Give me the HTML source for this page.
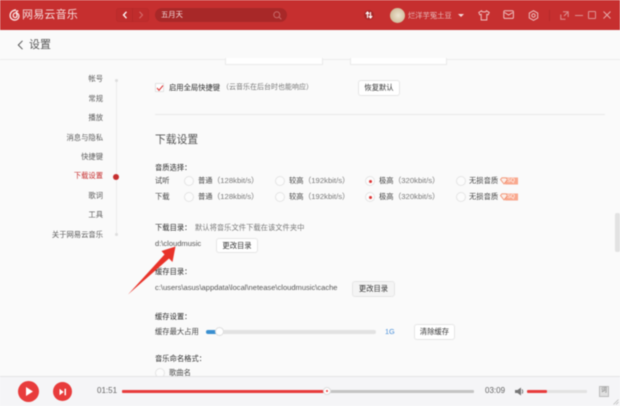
<!DOCTYPE html>
<html lang="zh">
<head>
<meta charset="utf-8">
<title>设置</title>
<style>
*{margin:0;padding:0;box-sizing:border-box}
html,body{width:620px;height:406px;overflow:hidden;background:#fafafa}
body{font-family:"Liberation Sans","Noto Sans CJK SC",sans-serif;position:relative;color:#555}
#w{position:absolute;left:0;top:0;width:620px;height:406px;filter:blur(.4px);overflow:hidden}
.t{position:absolute;white-space:nowrap;font-size:7.3px;line-height:12px;color:#444}
.g{color:#777}
.t .g{font-size:7.7px}
.b{color:#2a2a2a}
.nav{position:absolute;right:517px;font-size:7.3px;line-height:12px;color:#5a5a5a;white-space:nowrap}
.btn{position:absolute;background:#fff;border:1px solid #e6e6e6;border-radius:3px;font-size:7.3px;color:#333;text-align:center;white-space:nowrap}
.r{position:absolute;width:10px;height:10px;border-radius:50%;background:#fcfcfc;border:1px solid #e4e4e4}
.r.on:after{content:"";position:absolute;left:2.5px;top:2.5px;width:3px;height:3px;border-radius:50%;background:#d33}
svg{position:absolute;overflow:visible}
</style>
</head>
<body>
<div id="w">
<!-- top bar -->
<div style="position:absolute;left:0;top:0;width:620px;height:30px;background:#c62f2f"></div>
<svg style="left:9px;top:9px" width="12" height="12" viewBox="0 0 13 13" fill="none" stroke="#fbeaea" stroke-width="1.4"><path d="M7.6 1C4 1.2 1.2 3.6 1.2 7c0 2.9 2.3 5 5 5 2.600 0 4.600-1.900 4.600-4.300 0-2-1.500-3.500-3.300-3.500-1.700 0-3 1.200-3 2.800 0 1.300 1 2.300 2.200 2.300 1.100 0 2-.9 2-2L8 2.800c.2-.8 1.200-.9 2-.3"/></svg>
<div class="t" style="left:22px;top:7px;font-size:11px;line-height:16px;letter-spacing:.2px;color:#f6dcdc">网易云音乐</div>
<div style="position:absolute;left:116px;top:8px;width:33px;height:14px;border:1px solid #b92a2a;border-radius:3px;background:#c02c2c"></div>
<div style="position:absolute;left:132px;top:8px;width:1px;height:14px;background:#b42828"></div>
<svg style="left:122px;top:11px" width="6" height="8" fill="none" stroke="#fff" stroke-width="1.300"><path d="M4.500 .8 1.500 4l3 3.200"/></svg>
<svg style="left:138px;top:11px" width="6" height="8" fill="none" stroke="#d56a6a" stroke-width="1.100"><path d="M1.500 .8 4.500 4l-3 3.200"/></svg>
<div style="position:absolute;left:155px;top:8px;width:132px;height:14px;border-radius:7px;background:#a82828"></div>
<div class="t" style="left:161px;top:9px;color:#f3dede">五月天</div>
<svg style="left:273px;top:11px" width="9" height="9" fill="none" stroke="#c96a6a" stroke-width="1"><circle cx="3.800" cy="3.800" r="3"/><path d="M6 6l2.300 2.300"/></svg>
<div style="position:absolute;left:364px;top:10px;width:10px;height:10px;border-radius:50%;background:#a82828"></div>
<svg style="left:365px;top:11px" width="8" height="8" fill="none" stroke="#fff" stroke-width="1.100"><path d="M2.500 7V1.200M.8 3l1.700-2 1.700 2M5.500 1v5.800M3.800 5l1.700 2 1.700-2"/></svg>
<div style="position:absolute;left:390px;top:8px;width:15px;height:15px;border-radius:50%;background:radial-gradient(circle at 55% 50%,#ece4d0,#c8b08c 90%)"></div>
<div class="t" style="left:408px;top:10px;color:#e8b9b9">烂洋芋冤土豆</div>
<div style="position:absolute;left:458px;top:14px;border:3px solid transparent;border-top:3.500px solid #f3dada;border-bottom:0"></div>
<svg style="left:478px;top:10px" width="12" height="11" fill="none" stroke="#eec2c2" stroke-width="1"><path d="M3.500 .8 .8 2.500l1 2.300 1.400-.5V10h5.600V4.300l1.400.5 1-2.300L8.500.8C8 2.300 4 2.300 3.500.8z"/></svg>
<svg style="left:503px;top:10px" width="12" height="10" fill="none" stroke="#eec2c2" stroke-width="1"><rect x=".8" y=".8" width="9.600" height="7.600" rx="1.200"/><path d="M1.500 2.500l4.100 2.500 4.100-2.500"/></svg>
<svg style="left:528px;top:10px" width="11" height="11" fill="none" stroke="#eec2c2" stroke-width="1"><path d="M5.500 .7 9.700 3v5L5.500 10.300 1.300 8V3z"/><circle cx="5.500" cy="5.500" r="1.700"/></svg>
<div style="position:absolute;left:549px;top:10px;width:1px;height:11px;background:#b52a2a"></div>
<svg style="left:560px;top:11px" width="9" height="9" fill="none" stroke="#dc9292" stroke-width="1"><path d="M3 .8h5.200V6M.8 3.500v4.700H5.500M7.500 1.500 4 5"/></svg>
<div style="position:absolute;left:575px;top:14.500px;width:8px;height:1px;background:#dc9292"></div>
<div style="position:absolute;left:588px;top:11px;width:8px;height:8px;border:1px solid #dc9292;border-radius:1px"></div>
<svg style="left:603px;top:11px" width="8" height="8" fill="none" stroke="#e6aaaa" stroke-width="1"><path d="M.5.500l7 7M7.500.500l-7 7"/></svg>

<!-- header row -->
<div style="position:absolute;left:0;top:30px;width:620px;height:30px;background:#fafafa;border-bottom:1px solid #ececec"></div>
<svg style="left:17px;top:40px" width="7" height="10" fill="none" stroke="#555" stroke-width="1"><path d="M5.500.8 1.300 5l4.200 4.200"/></svg>
<div class="t" style="left:29px;top:38px;font-size:11px;line-height:15px;color:#555">设置</div>

<!-- partial inputs at top -->
<div style="position:absolute;left:225px;top:58px;width:98px;height:7px;background:#fff;border:1px solid #eaeaea;border-top:0"></div>
<div style="position:absolute;left:350px;top:58px;width:97px;height:7px;background:#fff;border:1px solid #eaeaea;border-top:0"></div>

<!-- sidebar -->
<div style="position:absolute;left:116px;top:80px;width:1px;height:155px;background:#ececec"></div>
<div style="position:absolute;left:115px;top:79px;width:3px;height:3px;border-radius:50%;background:#ddd"></div>
<div style="position:absolute;left:115px;top:233px;width:3px;height:3px;border-radius:50%;background:#ddd"></div>
<div class="nav" style="top:73px">帐号</div>
<div class="nav" style="top:93px">常规</div>
<div class="nav" style="top:112px">播放</div>
<div class="nav" style="top:132px">消息与隐私</div>
<div class="nav" style="top:151px">快捷键</div>
<div class="nav" style="top:170px;color:#c62f2f">下载设置</div>
<div class="nav" style="top:190px">歌词</div>
<div class="nav" style="top:209px">工具</div>
<div class="nav" style="top:229px">关于网易云音乐</div>
<div style="position:absolute;left:113px;top:174px;width:6px;height:6px;border-radius:50%;background:#c62f2f"></div>

<!-- hotkey row -->
<div style="position:absolute;left:155px;top:83px;width:9px;height:9px;background:#fff;border:1px solid #e2e2e2"></div>
<svg style="left:156px;top:84px" width="8" height="8" fill="none" stroke="#d33" stroke-width="1"><path d="M1 4l2 2.300L7 1.500"/></svg>
<div class="t b" style="left:169px;top:82px">启用全局快捷键</div>
<div class="t g" style="left:222px;top:82px;font-size:7px">（云音乐在后台时也能响应）</div>
<div class="btn" style="left:358px;top:80px;width:42px;height:16px;line-height:14px">恢复默认</div>
<div style="position:absolute;left:155px;top:114px;width:450px;height:1px;background:#eaeaea"></div>

<!-- download section -->
<div class="t" style="left:155px;top:133px;font-size:10.800px;line-height:15px;color:#555">下载设置</div>
<div class="t b" style="left:155px;top:162px">音质选择：</div>
<div class="t" style="left:155px;top:175px">试听</div>
<div class="t" style="left:155px;top:191px">下载</div>

<div class="r" style="left:184px;top:176px"></div>
<div class="t" style="left:198px;top:175px">普通<span class="g">（128kbit/s）</span></div>
<div class="r" style="left:275px;top:176px"></div>
<div class="t" style="left:289px;top:175px">较高<span class="g">（192kbit/s）</span></div>
<div class="r on" style="left:365px;top:176px"></div>
<div class="t" style="left:379px;top:175px">极高<span class="g">（320kbit/s）</span></div>
<div class="r" style="left:456px;top:176px"></div>
<div class="t" style="left:469px;top:175px">无损音质</div>
<svg style="left:500px;top:177px" width="19" height="8"><rect x="5" y=".5" width="13" height="7" fill="#f9a88e"/><path d="M.5 2.500 2 .8h4l1.500 1.700L4 7z" fill="#fbeee8" stroke="#f08a68" stroke-width=".8"/></svg>
<div class="t" style="left:507px;top:175px;font-size:5.500px;color:#fff">SQ</div>

<div class="r" style="left:184px;top:192px"></div>
<div class="t" style="left:198px;top:191px">普通<span class="g">（128kbit/s）</span></div>
<div class="r" style="left:275px;top:192px"></div>
<div class="t" style="left:289px;top:191px">较高<span class="g">（192kbit/s）</span></div>
<div class="r on" style="left:365px;top:192px"></div>
<div class="t" style="left:379px;top:191px">极高<span class="g">（320kbit/s）</span></div>
<div class="r" style="left:456px;top:192px"></div>
<div class="t" style="left:469px;top:191px">无损音质</div>
<svg style="left:500px;top:193px" width="19" height="8"><rect x="5" y=".5" width="13" height="7" fill="#f9a88e"/><path d="M.5 2.500 2 .8h4l1.500 1.700L4 7z" fill="#fbeee8" stroke="#f08a68" stroke-width=".8"/></svg>
<div class="t" style="left:507px;top:191px;font-size:5.500px;color:#fff">SQ</div>

<div class="t b" style="left:155px;top:222px">下载目录：</div>
<div class="t g" style="left:195px;top:222px">默认将音乐文件下载在该文件夹中</div>
<div class="t" style="left:155px;top:238px;font-size:7.550px;color:#555">d:\cloudmusic</div>
<div class="btn" style="left:216px;top:238px;width:42px;height:15px;line-height:13px">更改目录</div>

<div class="t b" style="left:155px;top:266px">缓存目录：</div>
<div class="t" style="left:155px;top:282px;font-size:7.550px;color:#555">c:\users\asus\appdata\local\netease\cloudmusic\cache</div>
<div class="btn" style="left:352px;top:281px;width:43px;height:16px;line-height:14px;background:#f4f4f4">更改目录</div>

<div class="t b" style="left:155px;top:311px">缓存设置：</div>
<div class="t" style="left:155px;top:326px">缓存最大占用</div>
<div style="position:absolute;left:206px;top:330px;width:170px;height:4px;background:#e2e2e2;border-radius:2px"></div>
<div style="position:absolute;left:206px;top:330px;width:13px;height:4px;background:#3a8fd0;border-radius:2px"></div>
<div style="position:absolute;left:215px;top:327px;width:9px;height:9px;border-radius:50%;background:#fff;border:1px solid #ddd"></div>
<div class="t" style="left:385px;top:326px;color:#4a90d9">1G</div>
<div class="btn" style="left:414px;top:324px;width:41px;height:16px;line-height:14px">清除缓存</div>

<div class="t b" style="left:155px;top:353px">音乐命名格式：</div>
<div class="r" style="left:155px;top:368px"></div>
<div class="t" style="left:169px;top:367px">歌曲名</div>

<!-- scrollbar -->
<div style="position:absolute;left:615px;top:213px;width:5px;height:39px;background:#e2e2e2;border-radius:2px"></div>

<!-- player -->
<div style="position:absolute;left:0;top:376px;width:620px;height:30px;background:#f5f5f7;border-top:1px solid #e3e3e5"></div>
<div style="position:absolute;left:18px;top:381px;width:21px;height:21px;border-radius:50%;background:#e83c3c"></div>
<svg style="left:25px;top:386px" width="9" height="11" fill="#fff"><path d="M1 1l7 4.500-7 4.500z"/></svg>
<div style="position:absolute;left:53px;top:382px;width:19px;height:19px;border-radius:50%;background:#e83c3c"></div>
<svg style="left:59px;top:388px" width="8" height="8" fill="#fff"><path d="M.5.800l4.200 3.200L.5 7.200zM5.500.8h1.500v6.400H5.500z"/></svg>
<div class="t" style="left:97px;top:385px;color:#666;font-size:8px">01:51</div>
<div style="position:absolute;left:122px;top:390px;width:352px;height:3px;background:#c4c4c4;border-radius:1px"></div>
<div style="position:absolute;left:122px;top:390px;width:205px;height:3px;background:#e83c3c;border-radius:1px"></div>
<div style="position:absolute;left:323px;top:387px;width:8px;height:8px;border-radius:50%;background:#fff;border:1px solid #ddd"></div>
<div style="position:absolute;left:326px;top:390px;width:2px;height:2px;border-radius:50%;background:#e83c3c"></div>
<div class="t" style="left:485px;top:385px;color:#666;font-size:8px">03:09</div>
<svg style="left:515px;top:387px" width="10" height="9" fill="#777"><path d="M0 3h2.500L6 .5v8L2.500 6H0z"/><path d="M7 2.500c1 1 1 3 0 4" fill="none" stroke="#777"/></svg>
<div style="position:absolute;left:527px;top:390px;width:60px;height:3px;background:#e2e2e2;border-radius:1px"></div>
<div style="position:absolute;left:527px;top:390px;width:20px;height:3px;background:#e83c3c;border-radius:1px"></div>
<div style="position:absolute;left:599px;top:386px;width:10px;height:11px;background:#e0e0e0;border:1px solid #bbb;font-size:6px;line-height:9px;text-align:center;color:#777">词</div>
<svg style="left:613px;top:399px" width="6" height="6" stroke="#bbb" stroke-width=".8"><path d="M5.500.5l-5 5M5.500 3l-2.500 2.500"/></svg>

<!-- red annotation arrow -->
<svg style="left:0;top:0" width="620" height="406" fill="#e8332a"><path d="M128 294.500 164.500 254.500 161.500 251 175.500 246.500 172.500 262 169 258.500z"/></svg>
</div>
</body>
</html>
